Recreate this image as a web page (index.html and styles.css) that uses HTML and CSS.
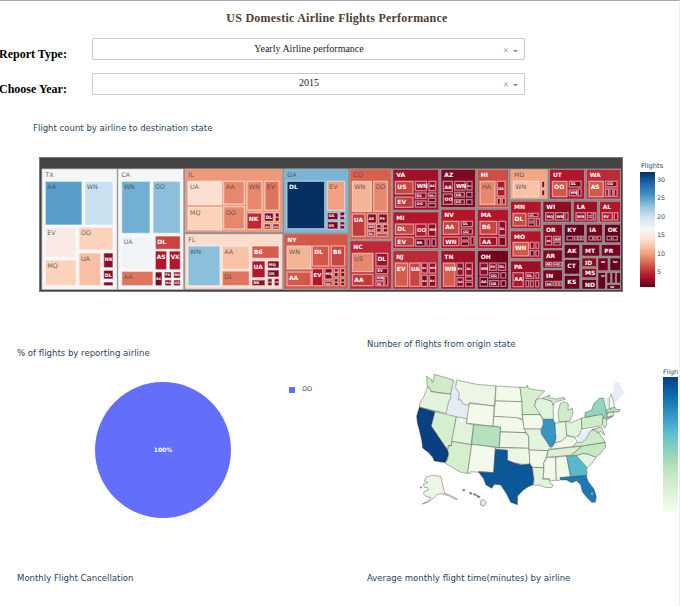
FILE: index.html
```html
<!DOCTYPE html>
<html lang="en">
<head>
<meta charset="utf-8">
<title>US Domestic Airline Flights Performance</title>
<link rel="stylesheet" href="styles.css">
</head>
<body>
<main class="page">
  <h1 class="page-title"><span>US Domestic Airline Flights Performance</span></h1>
  <section class="filters">
    <div class="filter">
      <h2 class="filter-label">Report Type:</h2>
      <div class="select"><span class="value">Yearly Airline performance</span><span class="clear">×</span><span class="arrow"></span></div>
    </div>
    <div class="filter">
      <h2 class="filter-label">Choose Year:</h2>
      <div class="select year"><span class="value">2015</span><span class="clear">×</span><span class="arrow"></span></div>
    </div>
  </section>

  <section class="tree-card">
    <h3 class="chart-title tree-title">Flight count by airline to destination state</h3>
    <div class="tree-row">
      <svg id="treemap" class="treemap" viewBox="39 157 584 135" width="584" height="135"></svg>
      <div class="tree-scale">
        <div class="scale-title">Flights</div>
        <div class="scale-body">
          <div class="scale-bar"></div>
          <div class="ticks"><span>30</span><span>25</span><span>20</span><span>15</span><span>10</span><span>5</span></div>
        </div>
      </div>
    </div>
  </section>

  <div class="charts">
    <section class="pie-card">
      <h3 class="chart-title">% of flights by reporting airline</h3>
      <div class="pie-row">
        <div class="pie">100%</div>
        <div class="legend"><i></i>OO</div>
      </div>
    </section>
    <section class="map-card">
      <h3 class="chart-title">Number of flights from origin state</h3>
      <div class="map-row">
        <svg id="map" class="map" viewBox="210 105 690 450" width="230" height="150"></svg>
        <div class="map-scale"><div class="scale-title">Fligh</div><div class="map-bar"></div></div>
      </div>
    </section>
  </div>

  <div class="charts bottom">
    <h3 class="chart-title">Monthly Flight Cancellation</h3>
    <h3 class="chart-title">Average monthly flight time(minutes) by airline</h3>
  </div>
</main>
<script src="script.js"></script>
</body>
</html>
```
FILE: styles.css
```css
* { box-sizing: border-box; }
body { margin: 0; background: #fff; overflow: hidden; }
.page {
  width: 680px; height: 606px; overflow: hidden;
  border-top: 1px solid #a9a9af; border-right: 1px solid #ececec;
  font-family: "Liberation Serif", serif;
}
h1, h2, h3 { margin: 0; }
.page-title {
  height: 37px; padding: 9px 5px 0 0; text-align: center;
  font-size: 12px; letter-spacing: .24px; line-height: 16px; color: #503d36;
}
.filters { display: grid; gap: 13px; }
.filter { display: grid; grid-template-columns: 92px 433px; height: 22px; }
.filter-label { padding-top: 9px; margin-left: -1px; font-size: 12px; line-height: 15px; color: #000; white-space: nowrap; }
.select {
  display: grid; grid-template-columns: 1fr 8px 7px; align-items: start; column-gap: 1px;
  height: 22px; padding: 3px 5px 0 25px; border: 1px solid #c8c8c8; border-radius: 2px;
  font-size: 10px; line-height: 13px; color: #222;
}
.select .value { text-align: center; padding-right: 2px; }
.year { padding-top: 2px; }
.clear { padding-top: 2px; font-size: 10px; color: #888; }
.arrow { margin: 8px 0 0 1px; border: 2.5px solid transparent; border-top-color: #888; border-bottom: 0; width: 5px; }
.chart-title {
  font-family: "DejaVu Sans Condensed", "DejaVu Sans", sans-serif; font-stretch: condensed;
  font-weight: 400; font-size: 9.5px; line-height: 12px; color: #2a3f5f; white-space: nowrap;
}
.tree-card { height: 215px; padding: 27px 0 0 33px; }
.tree-row { display: flex; padding: 23px 0 0 6px; }
.treemap { display: block; flex: none; font-family: "DejaVu Sans", sans-serif; }
.tree-scale { padding: 5px 0 0 17px; color: #2a3f5f; }
.scale-title { font: 6.7px/9px "DejaVu Sans", sans-serif; color: #2a3f5f; white-space: nowrap; }
.tree-scale .scale-title { margin-left: 1px; }
.scale-body { display: flex; gap: 2px; padding-top: 1px; }
.scale-bar {
  width: 15px; height: 115px;
  background: linear-gradient(#053061, #2166ac 10%, #4393c3 20%, #92c5de 30%, #d1e5f0 40%, #f7f7f7 50%, #fddbc7 60%, #f4a582 70%, #d6604d 80%, #b2182b 90%, #67001f);
}
.ticks { display: grid; grid-auto-rows: 18.4px; font: 6.3px/16px "DejaVu Sans", sans-serif; }
.charts { display: grid; grid-template-columns: 350px 312px; height: 225px; padding-left: 17px; }
.pie-card { padding-top: 37px; }
.pie-row { display: flex; align-items: flex-start; padding: 23px 0 0 78px; }
.pie {
  width: 136px; height: 136px; border-radius: 50%; background: #636efa;
  font: bold 6px/136px "DejaVu Sans", sans-serif; text-align: center; color: #fff;
}
.legend { display: flex; align-items: center; gap: 7px; margin: 3px 0 0 58px; font: 6.4px/9px "DejaVu Sans", sans-serif; color: #2a3f5f; }
.legend i { width: 6px; height: 6px; background: #636efa; }
.map-card { padding-top: 28px; }
.map-row { display: flex; padding: 15px 0 0 43px; }
.map { display: block; flex: none; }
.map-scale { padding: 2px 0 0 23px; }
.map-scale .scale-title { font-size: 6.3px; }
.map-bar { width: 15px; height: 135px; margin-top: 1px; background: linear-gradient(#084081, #0868ac 12.5%, #2b8cbe 25%, #4eb3d3 37.5%, #7bccc4 50%, #a8ddb5 62.5%, #ccebc5 75%, #e0f3db 87.5%, #f7fcf0); }
.bottom { height: 55px; padding-top: 37px; }
```
FILE: script.js
```js
const NS = "http://www.w3.org/2000/svg";

function add(parent, tag, attrs, text) {
  const el = document.createElementNS(NS, tag);
  for (const k in attrs) el.setAttribute(k, attrs[k]);
  if (text) el.textContent = text;
  parent.appendChild(el);
  return el;
}

// Row: label x1 y1 x2 y2 color. "*" opens a state, "_" means no label.
const panels = [
  { at: [36, 152], rows: `
*TX 18 51 243 412 f5f6f7
AA 28 88 138 219 579fc9
WN 146 88 231 219 c9e0ee
EV 28 226 120 316 f9ebe4
OO 129 226 231 294 fcd2bb
MQ 28 324 120 401 fcd2bb
UA 129 303 194 401 f8bfa4
NK 203 303 231 347 8f0c25
DL 203 355 231 381 7f0823
_ 203 390 231 401 7f0823
*CA 246 51 442 412 f5f6f7
WN 257 88 342 244 72afd3
OO 351 88 433 244 8bbfdc
UA 257 252 351 350 f0f4f7
AA 257 358 351 401 e0755d
DL 358 252 433 292 c94541
AS 358 297 392 353 b3152b
VX 400 297 433 353 b3152b
B6 358 360 378 401 7f0823
F9 385 360 406 378 7f0823
NK 413 360 433 378 7f0823
HA 387 384 406 401 7f0823
US 413 384 433 401 7f0823` },
  { at: [182, 152], rows: `
*IL 9 51 301 240 ee9a7a
UA 18 88 119 158 fcdfd0
AA 125 88 187 156 e6886d
WN 195 88 240 174 e6886d
EV 249 88 291 174 de735d
MQ 18 166 119 233 fcd2bb
OO 125 164 187 231 e6886d
NK 195 183 239 231 bd2a37
DL 247 183 274 208 7f0823
F9 280 183 291 208 7f0823
AS 247 216 265 231 7f0823
US 273 216 291 231 7f0823
*FL 9 246 301 411 fcdccd
WN 18 282 114 401 8bbfdc
AA 121 282 202 351 f9c2a7
DL 121 357 202 401 e0755d
B6 210 282 291 319 d65c4c
UA 210 327 249 377 b3152b
MQ 257 327 291 348 7f0823
US 257 354 291 375 7f0823
NK 210 384 249 401 8f0c25
EV 257 380 270 401 7f0823
VX 277 380 291 401 7f0823` },
  { at: [282, 152], rows: `
*GA 6 51 198 241 7bb4d5
DL 15 88 128 230 053061
EV 136 88 188 175 f2a080
UA 136 182 168 203 7f0823
WN 174 180 188 203 7f0823
US 136 209 168 231 7f0823
AA 174 209 188 231 7f0823
*NY 6 246 198 411 d35849
WN 15 282 87 351 f4b496
AA 15 360 87 401 d35849
DL 91 282 140 342 d35849
B6 148 282 188 342 c94541
EV 91 350 122 401 b3152b
MQ 129 350 150 381 7f0823
UA 129 388 150 401 7f0823
NK 157 350 168 374 7f0823
US 176 350 188 374 7f0823
VX 157 380 168 401 7f0823
F9 176 380 188 401 7f0823
*CO 204 51 328 262 d8604e
WN 211 88 268 178 f4b496
OO 275 88 316 178 e6886d
UA 211 186 249 253 c13b3d
AS 257 186 283 213 7f0823
F9 290 186 316 213 7f0823
AA 257 218 277 233 7f0823
DL 257 239 277 252 7f0823
B6 284 218 297 240 7f0823
US 304 218 317 240 7f0823
_ 284 246 317 252 7f0823
*NC 204 267 328 411 be2738
US 211 304 273 359 e6886d
AA 211 367 273 401 c13b3d
DL 282 304 317 342 9c1029
EV 282 349 317 365 7f0823
WN 282 372 304 385 7f0823
UA 282 390 304 401 7f0823
_ 309 372 317 401 7f0823` },
  { at: [388, 152], rows: `
*VA 15 52 152 174 a31129
US 22 88 75 126 c94541
EV 22 135 75 166 c13b3d
WN 82 88 115 116 9c1029
AA 123 88 143 116 8f0c25
DL 82 123 114 139 8f0c25
OO 82 147 114 165 7f0823
UA 121 123 143 133 67001f
_ 121 139 143 149 67001f
_ 121 155 143 165 67001f
*MI 15 180 152 289 b3152b
DL 22 216 77 247 c94541
EV 22 255 77 282 c13b3d
OO 83 216 114 253 b3152b
WN 121 216 143 253 8f0c25
NK 83 261 111 282 67001f
_ 117 261 125 282 67001f
_ 132 261 143 282 67001f
*NJ 15 296 152 411 bd2a37
EV 22 333 59 403 d65c4c
UA 65 333 96 403 c94541
DL 101 333 118 363 8f0c25
WN 124 333 143 363 8f0c25
AA 101 370 118 403 7f0823
B6 124 370 143 403 7f0823
*AZ 159 52 262 166 7f0823
AA 166 88 193 119 8f0c25
OO 166 126 193 157 8f0c25
WN 200 88 231 114 8f0c25
DL 237 88 252 114 7f0823
UA 200 121 229 135 7f0823
US 200 143 229 157 7f0823
_ 236 121 252 135 67001f
_ 236 143 252 157 67001f
*NV 159 172 262 289 b3152b
AA 166 208 213 247 c94541
WN 166 255 213 281 b3152b
DL 220 208 253 224 7f0823
OO 220 231 253 246 67001f
_ 220 254 242 264 67001f
_ 220 270 242 281 67001f
_ 249 254 258 279 67001f
*TN 159 296 262 411 a31129
WN 166 333 201 403 d65c4c
EV 207 333 226 370 8f0c25
DL 233 333 253 370 8f0c25
AA 207 377 226 403 7f0823
_ 233 375 253 385 67001f
_ 233 391 253 403 67001f
*HI 268 52 361 166 ce4e43
HA 276 88 321 157 e6886d
UA 328 88 351 132 b3152b
_ 328 139 337 157 7f0823
_ 343 139 352 157 7f0823
*MA 268 172 361 289 b3152b
B6 276 208 326 247 c94541
AA 276 256 326 281 a31129
DL 333 208 353 250 8f0c25
_ 333 256 353 281 7f0823
*OH 268 296 361 411 75001f
WN 276 333 299 369 8f0c25
AA 276 376 299 403 67001f
EV 305 333 325 355 8f0c25
DL 331 333 353 355 7f0823
OO 305 362 332 378 67001f
UA 305 386 332 403 67001f
_ 339 362 353 378 67001f
_ 339 386 353 403 67001f` },
  { at: [508, 152], rows: `
*MD 8 52 118 141 f4a582
WN 16 88 93 134 f9c2a7
_ 101 88 110 107 7f0823
_ 101 114 110 131 7f0823
*UT 125 52 229 141 b3152b
OO 133 88 177 134 d35849
DL 184 88 219 105 7f0823
WN 184 114 206 131 7f0823
_ 211 111 219 132 67001f
*WA 235 52 337 141 bd2a37
AS 243 88 286 134 d35849
OO 293 88 327 104 7f0823
_ 293 111 301 133 7f0823
_ 306 111 314 133 7f0823
_ 319 111 327 133 7f0823
*MN 8 148 99 229 b3152b
DL 15 184 54 222 c94541
OO 61 184 90 194 7f0823
_ 61 200 80 207 67001f
_ 61 213 80 222 67001f
_ 86 200 94 222 67001f
*MO 8 237 99 319 b3152b
WN 15 271 62 312 d35849
_ 67 271 78 289 7f0823
_ 84 271 92 289 7f0823
_ 67 296 78 312 67001f
_ 84 296 92 312 67001f
*PA 8 327 99 411 9c1029
AA 15 362 46 404 b3152b
DL 54 362 77 379 7f0823
_ 84 362 92 379 7f0823
_ 54 386 62 404 67001f
_ 68 386 76 404 67001f
_ 83 386 92 404 67001f
*WI 105 148 190 210 8f0c25
MQ 113 182 137 204 8f0c25
WN 143 182 166 204 7f0823
_ 171 182 180 204 7f0823
*LA 196 148 268 210 9c1029
WN 204 182 232 204 9c1029
_ 238 182 252 191 7f0823
_ 238 196 252 204 7f0823
_ 257 182 263 204 7f0823
*AL 275 148 337 210 b3152b
EV 283 182 313 204 b3152b
_ 319 182 329 204 8f0c25
*OR 105 217 163 289 8f0c25
AS 113 253 131 279 8f0c25
OO 137 253 157 266 7f0823
_ 137 271 157 279 67001f
*AR 105 294 163 348 7f0823
AA 113 331 131 342 8f0c25
OO 136 331 151 342 67001f
_ 155 331 161 342 67001f
*IN 105 354 163 411 75001f
AA 113 388 132 401 67001f
_ 137 388 142 401 67001f
_ 146 388 151 401 67001f
_ 155 388 160 401 67001f
*KY 169 217 229 272 67001f
_ 177 253 195 264 67001f
_ 200 253 208 264 67001f
_ 211 253 217 264 67001f
_ 220 253 226 264 67001f
*IA 235 217 283 272 75001f
_ 243 253 254 264 67001f
_ 258 253 264 264 67001f
_ 269 253 278 264 67001f
*OK 290 217 337 272 67001f
_ 297 253 310 264 67001f
_ 315 253 328 264 67001f
*AK 169 278 215 318 67001f
*CT 169 323 215 366 67001f
*KS 169 371 215 411 67001f
*MT 222 278 275 312 75001f
*PR 280 278 337 312 75001f
*ID 222 318 265 344 8f0c25
*MS 222 350 265 377 7f0823
*ND 222 383 265 411 67001f
*NE 270 318 300 356 75001f
*NH 306 318 337 356 67001f
*SC 270 362 292 411 67001f
*_ 297 362 308 393 67001f
*_ 312 362 322 393 67001f
*_ 326 362 337 393 67001f
*SD 297 398 337 411 67001f` }
];

function isLight(hex) {
  const n = parseInt(hex, 16);
  return (n >> 16) * 0.3 + ((n >> 8) & 255) * 0.59 + (n & 255) * 0.11 > 129;
}

const tree = document.getElementById("treemap");
add(tree, "rect", { x: 39, y: 157, width: 584, height: 135, fill: "#444" });
add(tree, "rect", { x: 41.5, y: 168.5, width: 579.5, height: 121.5, fill: "#8a8a8a" });
add(tree, "rect", { x: 39.5, y: 157.5, width: 583, height: 134, fill: "none", stroke: "#777" });
for (const p of panels) {
  const g = add(tree, "g", { transform: `translate(${p.at}) scale(.33333)` });
  for (const row of p.rows.trim().split("\n")) {
    const [name, a, b, c, d, color] = row.split(" ");
    const state = name[0] === "*";
    const label = name.replace("*", "").replace("_", "");
    const x = +a, y = +b, w = c - a, h = d - b;
    // Boxes too small for a full-size label get a reduced, centred one.
    const small = state ? w < 42 : w < 27 || h < 24;
    add(g, "rect", {
      x, y, width: w, height: h, fill: "#" + color,
      stroke: state ? "#b9b0b0" : "#fff", "stroke-opacity": state ? 0.7 : 0.48, "stroke-width": state ? 2 : 4
    });
    if (!label) continue;
    const light = isLight(color);
    const size = small ? Math.max(6, Math.min(state ? 8 : 11, w / 2, h * 0.75))
      : Math.min(light ? 19 : 18, w / (state ? 1.6 : 1.9));
    const inset = state ? (w < 70 ? 9 : 10) : Math.min(6, w * 0.12);
    const base = small ? (state ? Math.min(14, h - 3) : h / 2 + size * 0.36) : Math.min(24, h / 2 + 7);
    add(g, "text", {
      x: x + inset, y: y + base, "font-size": size,
      fill: light ? "#444" : "#fff", "fill-opacity": light ? 0.85 : 1,
      "font-weight": light ? 400 : 700
    }, label);
  }
}

// State outlines: fill, then polygon points.
const states = `
cfecc8 260,138 267,144 274,148 277,158 281,146 283,133 341,150 332,192 300,188 273,184 270,175 262,169
e3f4de 262,170 270,176 273,185 300,189 331,192 334,200 326,215 318,250 238,231 240,218 250,203 260,178
ebf6e4 350,150 410,163 468,168 463,228 389,218 387,226 368,222 362,209 355,210 358,190 347,173
f4faeb 388,220 462,228 459,289 379,279
084081 238,232 285,245 274,288 323,360 326,372 317,398 283,393 278,382 266,368 248,354 245,330 238,300 232,278 230,258
d5efce 285,245 349,260 335,347 326,346 323,360 274,288
e0f3db 349,260 381,266 379,280 401,284 393,344 335,334
b5e2bb 401,284 482,291 477,353 395,343
d5efce 335,334 395,344 383,430 362,427 314,399 322,390 326,372 323,360 325,348 334,348
f4faeb 395,343 466,352 461,428 418,424 418,427 392,425 391,430 383,430
f1f9e8 468,168 540,172 546,215 466,213
f4faeb 466,213 546,215 547,258 548,269 540,265 462,259
f1f9e8 462,259 530,263 548,270 558,308 481,305 482,291 459,288
ebf6e4 481,306 556,308 566,320 567,355 478,352
ebf6e4 466,353 567,355 570,402 545,403 520,398 502,391 502,361 466,358
0b5797 466,358 502,361 502,391 520,398 545,405 570,402 577,405 579,430 582,450 578,465 565,470 550,480 533,498 532,524 512,517 500,492 482,465 464,463 455,475 438,465 430,445 415,425 461,428
d5efce 540,172 560,172 562,165 565,175 590,180 614,183 588,210 584,228 600,245 600,254 547,254 546,215
f4faeb 547,254 600,254 609,272 610,282 602,298 552,297
e3f4de 552,297 600,297 607,310 620,330 630,350 625,362 567,360 566,318
f4faeb 567,360 625,362 620,375 611,400 610,413 577,412 570,402
e0f3db 577,412 610,413 612,430 608,447 628,449 631,460 640,465 635,473 615,472 600,466 580,465 582,448
e0f3db 588,210 600,205 620,208 635,213 640,228 640,268 610,268 605,258 590,238 584,228
3595c3 610,268 640,268 645,280 648,325 640,350 630,350 620,335 604,312 604,298 610,285
cfecc8 608,204 630,195 625,203 650,207 672,202 676,208 648,215 640,226 635,214
cfecc8 660,222 672,215 685,222 684,240 697,235 699,250 689,273 657,276 654,250
e6f5e0 645,280 677,274 681,318 665,333 645,340 648,325
e0f3db 677,274 695,278 724,265 726,295 715,318 703,322 680,315
f1f9e8 632,356 646,338 665,333 681,318 703,322 713,336 698,350 630,358
d9f0d2 625,360 725,348 707,365 690,376 620,382
f4faeb 622,382 647,382 649,450 632,453 628,445 609,446 612,420 611,400
f1f9e8 647,382 680,378 691,440 660,443 662,450 649,452
59b9cc 680,378 712,376 740,412 741,436 736,440 692,440
1e78b4 660,443 691,440 738,436 745,455 762,478 769,500 766,517 755,517 740,502 727,485 722,465 710,452 695,458 680,450 663,450
e3f4de 708,376 730,370 744,372 768,382 755,402 742,414
c5e8c2 695,377 707,365 725,348 796,337 797,352 780,372 768,382 744,372 728,370 712,376
cfecc8 698,350 712,336 725,338 740,325 750,305 757,300 778,310 792,330 794,337 725,348
cfecc8 724,264 785,252 790,262 788,283 780,288 726,297
91d4bf 735,262 735,248 755,240 762,220 778,205 790,204 798,240 800,262 820,258 803,268 796,268 785,253
d5efce 788,263 800,268 800,285 794,295 788,283
cfecc8 755,299 784,291 794,315 786,310 782,304 775,308 768,299
f4faeb 808,235 808,205 814,192 824,228 818,234
b5e2bb 800,239 825,232 830,239 840,238 838,245 800,248
e3f4de 802,249 820,246 822,255 802,262
ebf6e4 252,453 260,440 270,438 276,435 303,440 314,490 330,495 352,508 345,507 325,497 306,491 292,493 284,502 265,516 247,522 264,513 273,503 259,499 250,492 253,484 264,480 263,473 253,472 250,463 264,457
d9f0d2 422,512 430,508 440,518 432,528 422,525
888888 401,490 410,494 408,497 401,494
888888 389,487 396,489 394,493 389,491
888888 412,495 421,501 417,503 411,500
888888 368,479 374,478 373,483 369,483
888888 241,470 246,472 243,475`;
const blanks = `
341,150 350,152 346,172 358,190 355,208 362,210 367,224 388,226 380,265 317,251 326,215 334,200 332,192
712,330 712,320 726,298 728,308 745,298 754,298 748,310 738,328 725,338
793,206 807,202 806,235 800,238
818,198 822,162 828,156 838,158 845,178 856,188 835,208 824,222`;

const map = document.getElementById("map");
for (const pts of blanks.trim().split("\n")) add(map, "polygon", { points: pts, fill: "#e5ecf6" });
for (const line of states.trim().split("\n")) {
  const cut = line.indexOf(" ");
  add(map, "polygon", {
    points: line.slice(cut + 1), fill: "#" + line.slice(0, cut),
    stroke: "#444", "stroke-opacity": 0.6, "stroke-width": 2.1, "stroke-linejoin": "round"
  });
}
add(map, "circle", { cx: 756, cy: 491, r: 3, fill: "#8fc4e0" });
add(map, "ellipse", { cx: 364, cy: 272, rx: 4, ry: 6, fill: "#fff" });
```
